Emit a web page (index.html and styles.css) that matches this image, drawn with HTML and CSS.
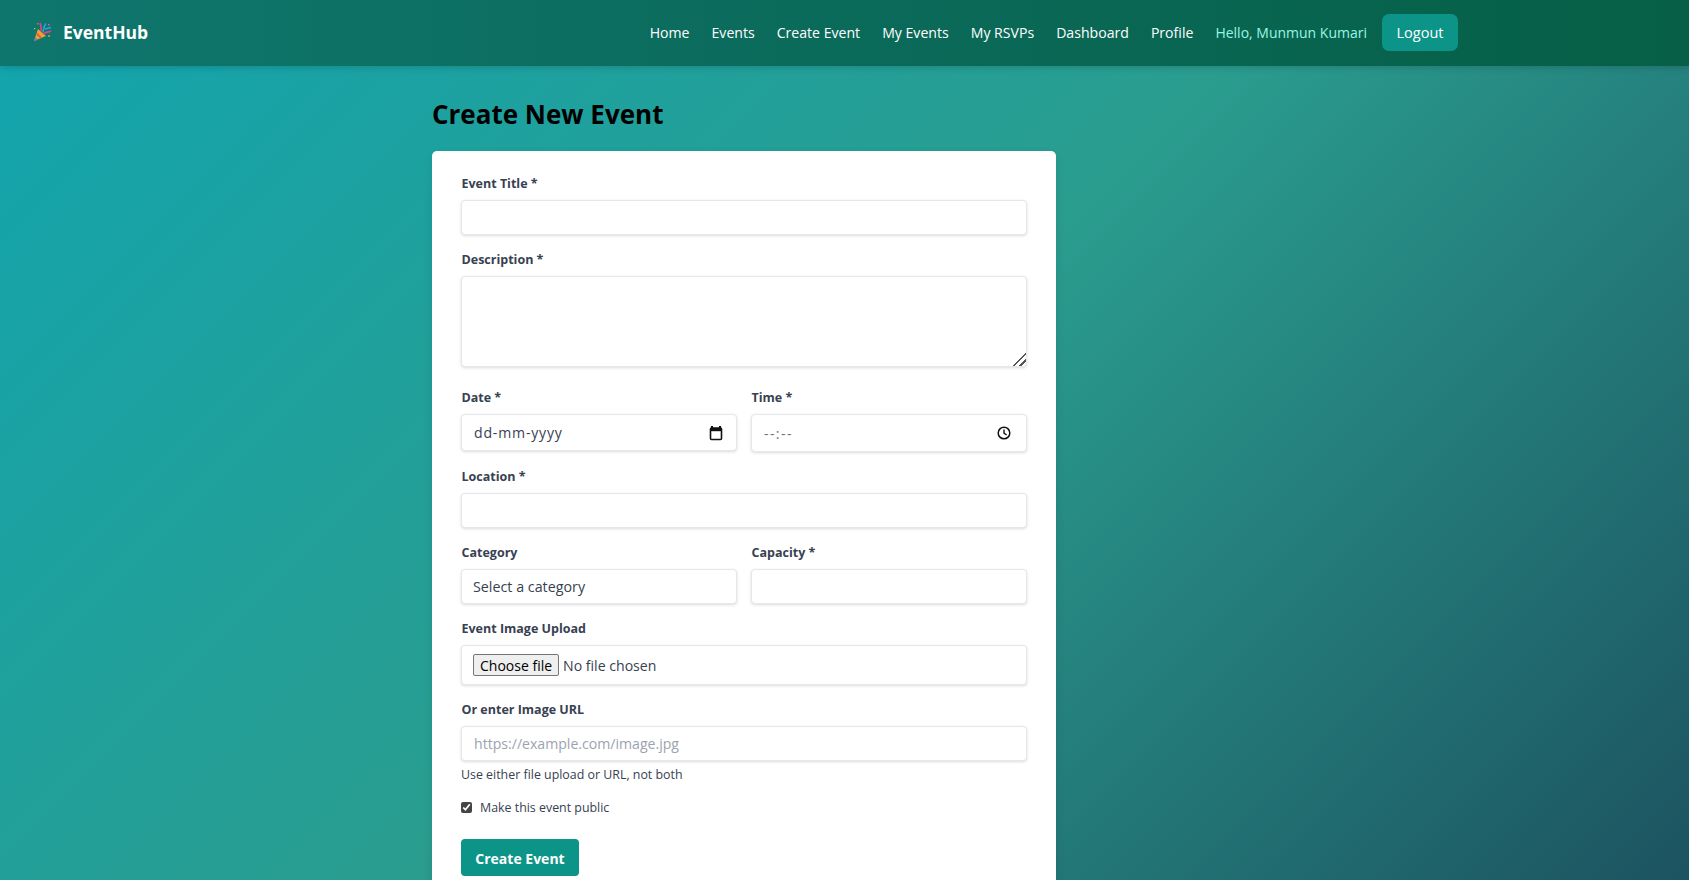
FILE: index.html
```html
<!DOCTYPE html>
<html lang="en">
<head>
    <meta charset="UTF-8">
    <meta name="viewport" content="width=device-width, initial-scale=1.0">
    <title>EventHub - Create Event</title>
    <link rel="stylesheet" href="styles.css">
</head>
<body>
    <nav class="navbar">
        <div class="nav-inner">
            <a class="brand" href="#">
                <svg class="brand-icon" width="20" height="20" viewBox="0 0 20 20">
                    <path d="M6 7 L14 14 L2 19 Z" fill="#f0a030"/>
                    <path d="M3.5 15.5 L6 18 L2 19 Z" fill="#7a6fc0"/>
                    <path d="M5 10.5 L10 15.5 L8 16.3 L4.2 12.6 Z" fill="#d9663a"/>
                    <path d="M8 1 C9.5 4 8.5 6 9.5 9" stroke="#ec3e8c" stroke-width="1.6" fill="none"/>
                    <path d="M11 10 C12 7 11 5 14 1.5" stroke="#2f9fd8" stroke-width="1.6" fill="none"/>
                    <path d="M11 12 C14 9 16 11 19 9" stroke="#ec3e8c" stroke-width="1.6" fill="none"/>
                    <path d="M13 7 L19 5.5" stroke="#2f9fd8" stroke-width="1.4"/>
                    <rect x="5" y="1" width="1.5" height="1.5" fill="#ef5a5a"/>
                    <rect x="16" y="2" width="1.5" height="1.5" fill="#e85a9a"/>
                    <rect x="16" y="13" width="2" height="2" fill="#8aa040"/>
                    <rect x="2" y="6" width="1.2" height="1.2" fill="#e8c040"/>
                </svg>
                <span>EventHub</span>
            </a>
            <div class="nav-links">
                <a href="#">Home</a>
                <a href="#">Events</a>
                <a href="#">Create Event</a>
                <a href="#">My Events</a>
                <a href="#">My RSVPs</a>
                <a href="#">Dashboard</a>
                <a href="#">Profile</a>
                <span class="nav-user">Hello, Munmun Kumari</span>
                <button type="button" class="btn-logout">Logout</button>
            </div>
        </div>
    </nav>

    <main class="page">
        <div class="content">
            <h1 class="page-title">Create New Event</h1>

            <form class="card">
                <div class="form-group">
                    <label for="title">Event Title *</label>
                    <input id="title" class="field" type="text">
                </div>

                <div class="form-group">
                    <label for="description" class="label-tight">Description *</label>
                    <textarea id="description" class="field field-area"></textarea>
                </div>

                <div class="form-row">
                    <div class="form-group">
                        <label>Date *</label>
                        <div class="field field-picker field-date">
                            <span>dd-mm-yyyy</span>
                            <svg width="14" height="16" viewBox="0 0 14 16">
                                <path d="M3 1v2M11 1v2" stroke="#111" stroke-width="2"/>
                                <rect x="1.5" y="3" width="11" height="11.5" rx="1" fill="none" stroke="#111" stroke-width="1.6"/>
                                <rect x="1.5" y="3" width="11" height="3.2" fill="#111"/>
                            </svg>
                        </div>
                    </div>
                    <div class="form-group">
                        <label>Time *</label>
                        <div class="field field-picker field-time">
                            <span>--:--</span>
                            <svg width="14" height="14" viewBox="0 0 14 14">
                                <circle cx="7" cy="7" r="5.8" fill="none" stroke="#111" stroke-width="1.5"/>
                                <path d="M7 3.4V7.2L9.6 9" fill="none" stroke="#111" stroke-width="1.4"/>
                            </svg>
                        </div>
                    </div>
                </div>

                <div class="form-group form-group-location">
                    <label for="location">Location *</label>
                    <input id="location" class="field" type="text">
                </div>

                <div class="form-row form-row-wide">
                    <div class="form-group">
                        <label for="category">Category</label>
                        <select id="category" class="field field-select">
                            <option>Select a category</option>
                        </select>
                    </div>
                    <div class="form-group">
                        <label for="capacity">Capacity *</label>
                        <input id="capacity" class="field" type="text">
                    </div>
                </div>

                <div class="form-group">
                    <label for="image" class="label-tight">Event Image Upload</label>
                    <div class="field field-file">
                        <button type="button" class="file-btn">Choose file</button>
                        <span>No file chosen</span>
                    </div>
                </div>

                <div class="form-group form-group-url">
                    <label for="image-url" class="label-tight">Or enter Image URL</label>
                    <input id="image-url" class="field" type="text" placeholder="https://example.com/image.jpg">
                    <p class="hint">Use either file upload or URL, not both</p>
                </div>

                <label class="check-row">
                    <input type="checkbox" checked>
                    <span>Make this event public</span>
                </label>

                <button type="button" class="btn-submit">Create Event</button>
            </form>
        </div>
    </main>
</body>
</html>
```

FILE: styles.css
```css
html, body { height: 100%; }
body {
    margin: 0;
    height: 880px;
    overflow: hidden;
    font-family: "Open Sans", "Noto Sans", sans-serif;
    font-size: 14px;
    color: #374151;
    background: linear-gradient(135deg, #12a5ae 0%, #2a9d8f 50%, #1c5360 100%);
}

.navbar {
    height: 66px;
    background: linear-gradient(90deg, #0f766e, #065f46);
    box-shadow: 0 2px 6px rgba(0, 0, 0, 0.15);
}
.nav-inner {
    width: 1458px;
    height: 100%;
    padding: 0 0 1px 32px;
    box-sizing: border-box;
    display: flex;
    align-items: center;
    justify-content: space-between;
}
.brand {
    display: flex;
    align-items: center;
    gap: 11px;
    margin-bottom: 1px;
    color: #fff;
    font-size: 17.5px;
    font-weight: 700;
    text-decoration: none;
}
.nav-links {
    display: flex;
    align-items: center;
    gap: 22px;
}
.nav-links a {
    color: #fff;
    font-size: 14.1px;
    text-decoration: none;
}
.nav-user {
    color: #99f6e4;
    font-size: 14px;
    margin-right: -7px;
}
.btn-logout {
    width: 76px;
    height: 37px;
    border: none;
    border-radius: 7px;
    background: #0d9488;
    color: #fff;
    font-family: inherit;
    font-size: 14.5px;
}

.page { width: 1488px; }
.content { width: 624px; margin: 0 auto; }
.page-title {
    margin: 0;
    height: 85px;
    line-height: 96px;
    color: #000;
    font-size: 26px;
    font-weight: 700;
}

.card {
    background: #fff;
    border-radius: 5px;
    padding: 21px 29px 28px;
    box-shadow: 0 4px 10px rgba(0, 0, 0, 0.1);
}
.form-group { margin-bottom: 14px; }
.form-group label {
    display: block;
    height: 21px;
    line-height: 23px;
    padding-left: 0.5px;
    margin-bottom: 7px;
    font-size: 12.5px;
    font-weight: 700;
}
.form-group label.label-tight { line-height: 21px; }
.form-group-location { margin-bottom: 13px; }
.form-row {
    display: grid;
    grid-template-columns: 1fr 1fr;
    gap: 14px;
}
.form-row .form-group { margin-bottom: 13px; }
.form-row-wide .form-group { margin-bottom: 14px; }

.field {
    display: block;
    width: 100%;
    height: 35px;
    box-sizing: border-box;
    padding: 0 12px;
    border: 1px solid #e5e7eb;
    border-radius: 4px;
    background: #fff;
    box-shadow: 0 1px 3px rgba(0, 0, 0, 0.14);
    font-family: inherit;
    font-size: 14.1px;
    color: #374151;
    outline: none;
}
.field::placeholder { color: #9ca3af; }
.field-area { height: 91px; margin-top: -1px; margin-bottom: 19px; }
.field-area::-webkit-resizer {
    background: linear-gradient(135deg, transparent 55%, #555 55%, #555 63%, transparent 63%, transparent 76%, #555 76%, #555 84%, transparent 84%);
}
.field-picker {
    display: flex;
    align-items: center;
    justify-content: space-between;
    padding-right: 13px;
    letter-spacing: 0.8px;
}
.field-date { height: 37px; }
.field-time { height: 38px; padding-right: 15px; color: #6b7280; letter-spacing: 1.4px; }
.field-select { appearance: none; padding: 0 11px; font-size: 14.3px; }
.field-file {
    display: flex;
    align-items: center;
    gap: 4px;
    height: 40px;
    margin-top: -1px;
    padding: 0 11px;
}
.file-btn {
    height: 22px;
    padding: 0 6px;
    border: 1px solid #767676;
    border-radius: 2px;
    background: #efefef;
    color: #000;
    font-family: inherit;
    font-size: 14px;
}
.form-group-url { margin-bottom: 14px; }
.form-group-url label { margin-bottom: 6px; }
.hint {
    margin: 5px 0 0;
    height: 18px;
    line-height: 18px;
    font-size: 12.4px;
}
.check-row {
    display: flex;
    align-items: center;
    gap: 8px;
    height: 18px;
    margin-bottom: 23px;
    font-size: 12.4px;
}
.check-row input {
    width: 11px;
    height: 11px;
    margin: 0;
    accent-color: #444;
}
.btn-submit {
    display: block;
    width: 118px;
    height: 37px;
    padding-top: 2px;
    border: none;
    border-radius: 4px;
    background: #0d9488;
    color: #fff;
    font-family: inherit;
    font-size: 14px;
    font-weight: 700;
}
```
